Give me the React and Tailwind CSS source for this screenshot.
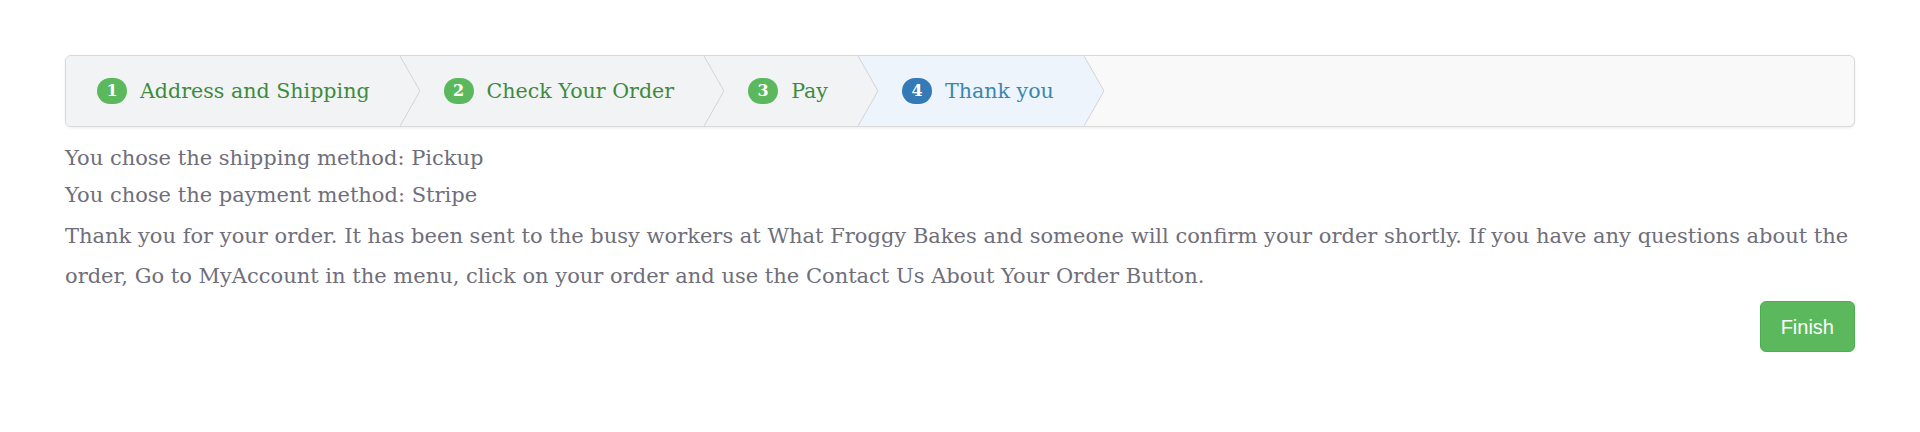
import React from "react";

const steps = [
  { n: 1, label: "Address and Shipping", done: true },
  { n: 2, label: "Check Your Order", done: true },
  { n: 3, label: "Pay", done: true },
  { n: 4, label: "Thank you", active: true },
];

const Step = ({ step, first }) => {
  const bg = step.active ? "#eef4fc" : "#f2f3f5";
  return (
    <div
      className={`relative flex items-center h-full pr-[30px] ${
        first ? "pl-[31px]" : "pl-[44px]"
      } ${step.active ? "bg-[#eef4fc]" : "bg-[#f2f3f5]"}`}
    >
      <span
        className={`flex items-center justify-center w-[30px] h-[26px] rounded-full text-white text-[16px] font-bold ${
          step.active ? "bg-[#337ab7]" : "bg-[#5cb85c]"
        }`}
      >
        {step.n}
      </span>
      <span
        className={`ml-[13px] text-[20.6px] ${
          step.active ? "text-[#3a87ad]" : "text-[#3d8b3d]"
        }`}
      >
        {step.label}
      </span>
      {/* chevron */}
      <svg
        className="absolute top-0 right-[-20px] z-10 h-full w-[20px]"
        viewBox="0 0 20 70"
        preserveAspectRatio="none"
      >
        <path d="M0 0 L20 35 L0 70" fill={bg} stroke="#d3d3d3" strokeWidth="1" />
      </svg>
    </div>
  );
};

export default function App() {
  return (
    <div className="bg-white min-h-[432px] px-[65px] pt-[55px] font-['DejaVu_Serif',serif]">
      {/* Steps */}
      <div className="flex h-[72px] rounded-[6px] border border-[#d9d9d9] bg-[#f9f9f9] shadow-[0_1px_3px_rgba(0,0,0,0.08)] overflow-hidden">
        {steps.map((s, i) => (
          <Step key={s.n} step={s} first={i === 0} />
        ))}
      </div>

      {/* Summary */}
      <div className="text-[21px] text-[#6f6e7a] mt-[13px]">
        <p className="leading-[37px]">You chose the shipping method: Pickup</p>
        <p className="leading-[37px]">You chose the payment method: Stripe</p>
        <p className="leading-[40px] mt-[2px]">
          Thank you for your order. It has been sent to the busy workers at What Froggy Bakes
          and someone will confirm your order shortly. If you have any questions about the
          order, Go to MyAccount in the menu, click on your order and use the Contact Us About
          Your Order Button.
        </p>
      </div>

      <div className="flex justify-end mt-[5px]">
        <button className="h-[51px] px-[20px] rounded-[6px] bg-[#5cb85c] border border-[#4cae4c] text-white text-[20px] font-['Liberation_Sans',sans-serif]">
          Finish
        </button>
      </div>
    </div>
  );
}
